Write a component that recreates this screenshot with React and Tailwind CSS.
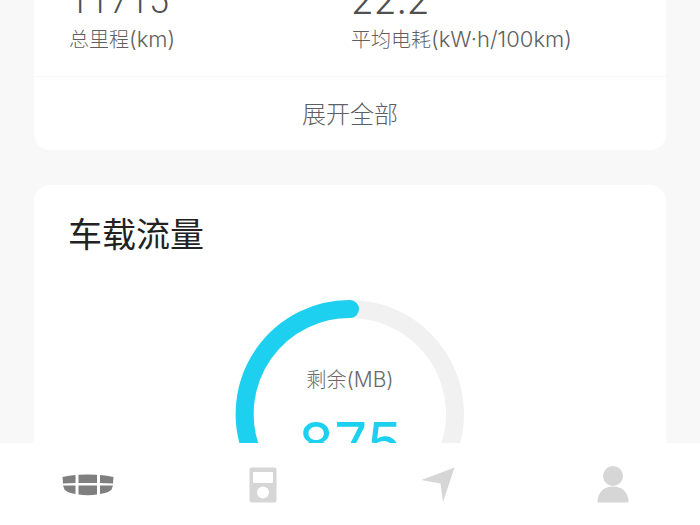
const font = { fontFamily: 'Inter, "Noto Sans CJK SC", sans-serif' };
const roboto = { fontFamily: 'Roboto, sans-serif' };

function Stat({ value, valueClass, valueStyle, cjk, latin, className }) {
  return (
    <div className={className}>
      <div style={valueStyle} className={`h-[40px] leading-[40px] font-light text-[#505050] ${valueClass}`}>{value}</div>
      <div className="mt-[4px] h-[28px] text-[20px] leading-[28px] font-light whitespace-nowrap text-[#5f5f5f]">
        {cjk}<span className="text-[22px]">{latin}</span>
      </div>
    </div>
  );
}

function Ring() {
  return (
    <div className="relative mx-auto mt-[40px] h-[230px] w-[230px]">
      <svg width="230" height="230" viewBox="0 0 230 230" className="block">
        <circle cx="115" cy="114" r="105" fill="none" stroke="#f1f1f1" strokeWidth="18" />
        <path d="M 16 150 A 105 105 0 0 1 115 9" fill="none" stroke="#1dd0f0" strokeWidth="18" strokeLinecap="round" />
      </svg>
      <div className="absolute inset-x-0 top-[66px] text-center text-[20px] leading-[28px] font-light text-[#6a6a6a]">
        剩余<span className="text-[21px]">(MB)</span>
      </div>
      <div className="absolute inset-x-0 top-[108px] text-center text-[58px] leading-[70px] font-normal text-[#1dd0f0]">875</div>
    </div>
  );
}

function Geely() {
  return (
    <svg width="52" height="22" viewBox="0 0 52 22" fill="#7f7f7f">
      <path d="M0.5 3 Q7 1.5 13.5 1 L13.5 9 L1 9.5 Z" />
      <path d="M16.5 0.8 Q26 0 35 0.8 L35 9 L16.5 9 Z" />
      <path d="M38 1 Q45 1.5 51.5 3 L51 9.5 L38 9 Z" />
      <path d="M1 11.5 L13.5 11.5 L13.5 20 Q5 18.5 2.5 15.5 Z" />
      <path d="M16.5 11.5 L35 11.5 L35 20.5 Q26 22 16.5 20.5 Z" />
      <path d="M38 11.5 L51 11.5 L49.5 15.5 Q47 18.5 38 20 Z" />
    </svg>
  );
}

function Player() {
  return (
    <svg width="28" height="36" viewBox="0 0 28 36">
      <rect x="0.5" y="0.5" width="27" height="35" rx="2" fill="#d6d6d6" />
      <rect x="4" y="5" width="20" height="11" rx="1" fill="#ffffff" />
      <circle cx="14" cy="25.5" r="6" fill="#ffffff" />
    </svg>
  );
}

function Arrow() {
  return (
    <svg width="34" height="36" viewBox="0 0 34 36" fill="#d6d6d6">
      <path d="M0.5 13 L33.5 0.5 L22 35 L19.5 16.5 Z" />
    </svg>
  );
}

function Person() {
  return (
    <svg width="32" height="37" viewBox="0 0 32 37" fill="#d6d6d6">
      <circle cx="16" cy="10" r="10" />
      <path d="M0.5 36.5 C0.5 27 6 20.5 16 20.5 C26 20.5 31.5 27 31.5 36.5 Z" />
    </svg>
  );
}

export default function App() {
  return (
    <div style={font} className="flex h-[525px] w-[700px] flex-col overflow-hidden bg-[#f8f8f8]">
      <div className="h-[443px] overflow-hidden">
        <div className="-mt-[23px] px-[34px]">
          <div className="rounded-b-[16px] bg-white">
            <div className="flex h-[100px] border-b border-[#f6f6f6] pt-[4px] pl-[35px]">
              <Stat value="11715" valueClass="text-[36px]" valueStyle={roboto} cjk="总里程" latin="(km)" className="w-[282px]" />
              <Stat value="22.2" valueClass="text-[37px]" cjk="平均电耗" latin="(kW·h/100km)" />
            </div>
            <div className="flex h-[73px] items-center justify-center pt-[2px] text-[24px] font-light text-[#5f5f5f]">展开全部</div>
          </div>
          <div className="mt-[35px] h-[400px] rounded-[16px] bg-white pt-[25px] pl-[34px]">
            <div className="text-[34px] leading-[50px] font-normal text-[#222222]">车载流量</div>
            <div className="-ml-[34px]"><Ring /></div>
          </div>
        </div>
      </div>
      <div className="grid h-[82px] grid-cols-4 bg-white pt-[23px]">
        <div className="flex h-[37px] items-center justify-center"><Geely /></div>
        <div className="flex h-[37px] items-center justify-center"><Player /></div>
        <div className="flex h-[37px] items-center justify-center"><Arrow /></div>
        <div className="flex h-[37px] items-center justify-center"><Person /></div>
      </div>
    </div>
  );
}
